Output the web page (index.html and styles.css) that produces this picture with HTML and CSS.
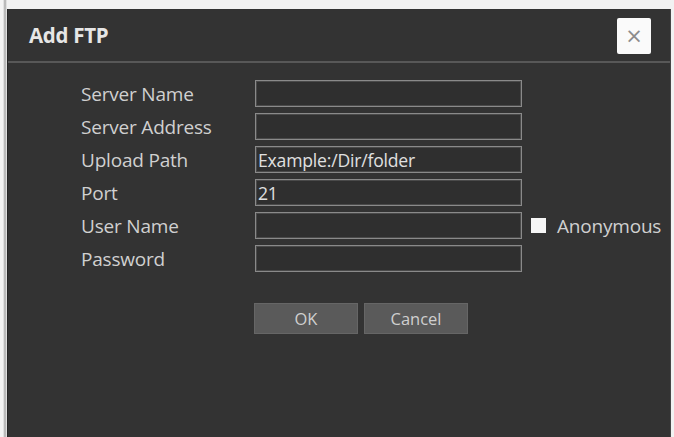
FILE: index.html
```html
<!DOCTYPE html>
<html lang="en">
<head>
    <meta charset="UTF-8">
    <meta name="viewport" content="width=device-width, initial-scale=1.0">
    <title>Add FTP</title>
    <link rel="stylesheet" href="styles.css">
</head>
<body>
    <div class="page">
        <div class="dialog">
            <div class="dialog-header">
                <h2 class="dialog-title">Add FTP</h2>
                <button class="close-btn" type="button">&times;</button>
            </div>

            <div class="dialog-body">
                <div class="form-grid">
                    <label for="server-name">Server Name</label>
                    <input type="text" id="server-name">
                    <span></span>

                    <label for="server-address">Server Address</label>
                    <input type="text" id="server-address">
                    <span></span>

                    <label for="upload-path">Upload Path</label>
                    <input type="text" id="upload-path" value="Example:/Dir/folder">
                    <span></span>

                    <label for="port">Port</label>
                    <input type="text" id="port" value="21">
                    <span></span>

                    <label for="user-name">User Name</label>
                    <input type="text" id="user-name">
                    <div class="check">
                        <input type="checkbox" id="anonymous">
                        <label for="anonymous">Anonymous</label>
                    </div>

                    <label for="password">Password</label>
                    <input type="password" id="password">
                    <span></span>
                </div>

                <div class="actions">
                    <button class="btn" type="button">OK</button>
                    <button class="btn" type="button">Cancel</button>
                </div>
            </div>
        </div>
    </div>
</body>
</html>
```

FILE: styles.css
```css
html, body {
    margin: 0;
    height: 100%;
    background-color: #f2f2f2;
    overflow: hidden;
}
body {
    font-family: 'Open Sans', 'Liberation Sans', sans-serif;
    color: #d2d2d2;
}
.page {
    height: 100%;
    box-sizing: border-box;
    padding: 9px 3px 0 7px;
    background: linear-gradient(to right, #f4f4f4 0, #f4f4f4 3px, #a8a8a8 5px, #f2f2f2 7px);
}
.dialog {
    height: 100%;
    background-color: #333333;
    border-right: 1px solid #474747;
    border-left: 1px solid #262626;
    box-sizing: border-box;
}
.dialog-header {
    height: 52px;
    display: flex;
    align-items: center;
    justify-content: space-between;
    padding: 0 19px 0 21px;
    border-bottom: 2px solid #585858;
}
.dialog-title {
    margin: 0;
    font-size: 20.5px;
    font-weight: bold;
    color: #e6e6e6;
    letter-spacing: -0.3px;
}
.close-btn {
    width: 34px;
    height: 36px;
    margin-top: 2px;
    padding: 0;
    border: none;
    border-radius: 2px;
    background-color: #fafafa;
    color: #8c8c8c;
    font-family: 'DejaVu Sans', sans-serif;
    font-size: 21px;
    line-height: 36px;
    cursor: pointer;
}
.dialog-body {
    padding: 17px 0 0 73px;
}
.form-grid {
    display: grid;
    grid-template-columns: 174px 267px auto;
    grid-auto-rows: 27px;
    row-gap: 6px;
    align-items: center;
}
.form-grid label {
    font-size: 19px;
    color: #d0d0d0;
    letter-spacing: -0.2px;
}
.form-grid input[type="text"],
.form-grid input[type="password"] {
    height: 27px;
    box-sizing: border-box;
    margin: 0;
    padding: 0 2px;
    border: 1px solid #8a8a8a;
    box-shadow: inset 0 0 0 1px #4a4a4a;
    background-color: #2f2f2f;
    color: #e0e0e0;
    font-family: 'Open Sans', 'Liberation Sans', sans-serif;
    font-size: 17.6px;
    letter-spacing: -0.2px;
    outline: none;
}
.check {
    display: flex;
    align-items: center;
    gap: 11px;
    padding-left: 9px;
}
.check input {
    appearance: none;
    width: 15px;
    height: 15px;
    margin: 0;
    background-color: #f6f6f6;
    border: none;
}
.check label {
    white-space: nowrap;
}
.actions {
    display: flex;
    gap: 6px;
    margin: 31px 0 0 173px;
}
.btn {
    width: 104px;
    height: 31px;
    border: 1px solid #666;
    background-color: #5a5a5a;
    color: #cfcfcf;
    font-family: 'Open Sans', 'Liberation Sans', sans-serif;
    font-size: 16.5px;
    cursor: pointer;
}
.btn:hover {
    background-color: #666;
}
```
